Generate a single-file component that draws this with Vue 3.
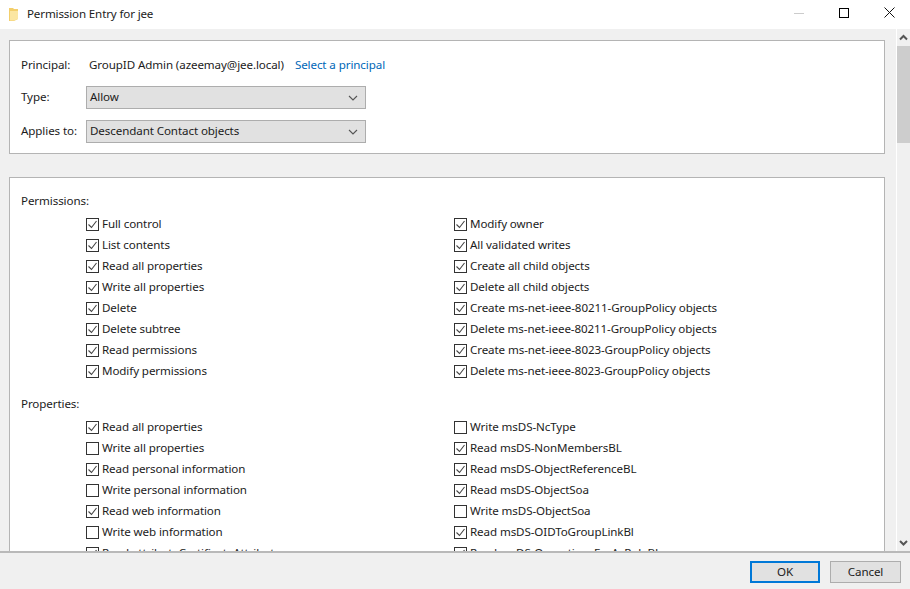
<template>
  <div class="window">
    <div class="titlebar">
      <svg class="folder" width="10" height="13" viewBox="0 0 10 13">
        <path d="M0 0h4l1 1h4v10l-4 2H0z" fill="#f3cf6c" />
        <path d="M1 3h8v8l-4 1.6H1z" fill="#fbe6a2" />
      </svg>
      <span class="title">Permission Entry for jee</span>
      <span class="btn-min"></span>
      <svg class="btn-max" width="10" height="10" viewBox="0 0 10 10">
        <rect x="0.5" y="0.5" width="9" height="9" fill="none" stroke="#000" />
      </svg>
      <svg class="btn-close" width="11" height="11" viewBox="0 0 11 11">
        <path d="M0.5 0.5l10 10M10.5 0.5l-10 10" fill="none" stroke="#111" />
      </svg>
    </div>

    <div class="middle">
      <div class="content">
        <div class="panel head">
          <div class="form-row principal">
            <span class="form-label">Principal:</span>
            <span>GroupID Admin (azeemay@jee.local)</span>
            <a class="link">Select a principal</a>
          </div>
          <div class="form-row">
            <span class="form-label">Type:</span>
            <div class="select">
              <span>Allow</span>
              <svg width="10" height="6" viewBox="0 0 10 6"><path d="M1 1l4 4 4-4" fill="none" stroke="#555" stroke-width="1.1" /></svg>
            </div>
          </div>
          <div class="form-row">
            <span class="form-label">Applies to:</span>
            <div class="select">
              <span>Descendant Contact objects</span>
              <svg width="10" height="6" viewBox="0 0 10 6"><path d="M1 1l4 4 4-4" fill="none" stroke="#555" stroke-width="1.1" /></svg>
            </div>
          </div>
        </div>

        <div class="panel perms">
          <div class="section-label first">Permissions:</div>
          <div class="check-grid">
            <div v-for="item in permissions" :key="item.text" class="check-row">
              <span class="box">
                <svg v-if="item.on" width="11" height="11" viewBox="0 0 11 11"><path d="M1.5 5.5l3 3 5-6.5" fill="none" stroke="#444" stroke-width="1.1" /></svg>
              </span>
              <span>{{ item.text }}</span>
            </div>
          </div>
          <div class="section-label">Properties:</div>
          <div class="check-grid">
            <div v-for="item in properties" :key="item.text" class="check-row">
              <span class="box">
                <svg v-if="item.on" width="11" height="11" viewBox="0 0 11 11"><path d="M1.5 5.5l3 3 5-6.5" fill="none" stroke="#444" stroke-width="1.1" /></svg>
              </span>
              <span>{{ item.text }}</span>
            </div>
          </div>
        </div>
      </div>

      <div class="scrollbar">
        <svg width="13" height="17" viewBox="0 0 13 17"><path d="M3 10.5l3.5-3.5 3.5 3.5" fill="none" stroke="#555" stroke-width="2" /></svg>
        <div class="thumb"></div>
        <div class="track"></div>
        <svg width="13" height="17" viewBox="0 0 13 17"><path d="M3 7l3.5 3.5L10 7" fill="none" stroke="#555" stroke-width="2" /></svg>
      </div>
    </div>

    <div class="footer">
      <button class="btn primary">OK</button>
      <button class="btn">Cancel</button>
    </div>
  </div>
</template>

<script setup>
const toItems = (list) => list.map(([text, on]) => ({ text, on }))

// left and right column alternate so the grid fills row by row
const permissions = toItems([
  ['Full control', true], ['Modify owner', true],
  ['List contents', true], ['All validated writes', true],
  ['Read all properties', true], ['Create all child objects', true],
  ['Write all properties', true], ['Delete all child objects', true],
  ['Delete', true], ['Create ms-net-ieee-80211-GroupPolicy objects', true],
  ['Delete subtree', true], ['Delete ms-net-ieee-80211-GroupPolicy objects', true],
  ['Read permissions', true], ['Create ms-net-ieee-8023-GroupPolicy objects', true],
  ['Modify permissions', true], ['Delete ms-net-ieee-8023-GroupPolicy objects', true]
])

const properties = toItems([
  ['Read all properties', true], ['Write msDS-NcType', false],
  ['Write all properties', false], ['Read msDS-NonMembersBL', true],
  ['Read personal information', true], ['Read msDS-ObjectReferenceBL', true],
  ['Write personal information', false], ['Read msDS-ObjectSoa', true],
  ['Read web information', true], ['Write msDS-ObjectSoa', false],
  ['Write web information', false], ['Read msDS-OIDToGroupLinkBl', true],
  ['Read attributeCertificateAttribute', true], ['Read msDS-OperationsForAzRoleBL', true]
])
</script>

<style>
html, body {
  margin: 0;
  background: #f0f0f0;
}
</style>

<style scoped>
.window {
  width: 910px;
  height: 589px;
  display: flex;
  flex-direction: column;
  overflow: hidden;
  background: #f0f0f0;
  font-family: "Noto Sans", "Open Sans", sans-serif;
  font-size: 11.6px;
  letter-spacing: -0.1px;
  color: #1c1c1c;
}

/* Noto sits about 1px lower than the reference text */
.title,
.form-row > span,
.link,
.select > span,
.check-row > span:last-child {
  padding-bottom: 2px;
}

.titlebar {
  height: 29px;
  flex: none;
  display: flex;
  align-items: center;
  background: #fff;
  padding-left: 9px;
}

.folder {
  margin-right: 8px;
}

.title {
  flex: 1;
  letter-spacing: -0.15px;
}

.btn-min {
  width: 10px;
  height: 1px;
  margin-right: 35px;
  margin-top: -3px;
  background: #cccccc;
}

.btn-max {
  margin-right: 35px;
  margin-top: -4px;
}

.btn-close {
  margin-right: 15px;
  margin-top: -4px;
}

.middle {
  flex: 1;
  min-height: 0;
  display: flex;
}

.content {
  flex: 1;
  min-width: 0;
  padding: 11px 11px 0 9px;
  overflow: hidden;
}

.panel {
  background: #fff;
  border: 1px solid #b4b4b4;
}

.head {
  height: 114px;
  box-sizing: border-box;
  padding: 11px 0 0 11px;
  margin-bottom: 23px;
}

.form-row {
  display: flex;
  align-items: center;
  height: 23px;
  margin-bottom: 11px;
}

.principal {
  margin-bottom: 8px;
  height: 26px;
}

.form-label {
  width: 65px;
  flex: none;
}

.principal .form-label {
  width: 68px;
}

.link {
  color: #0067b8;
  margin-left: 11px;
}

.select {
  width: 280px;
  height: 23px;
  box-sizing: border-box;
  display: flex;
  align-items: center;
  justify-content: space-between;
  padding: 0 3px;
  background: #e1e1e1;
  border: 1px solid #adadad;
}

.select svg {
  margin-right: 4px;
}

.perms {
  padding: 13px 0 0 11px;
  height: 600px;
}

.section-label {
  height: 21px;
  line-height: 19px;
  margin-top: 12px;
}

.section-label.first {
  margin-top: 0;
}

.check-grid {
  display: grid;
  grid-template-columns: 368px 1fr;
  grid-auto-rows: 21px;
  padding-left: 65px;
  margin-top: 2px;
}

.check-row {
  display: flex;
  align-items: center;
  gap: 3px;
  white-space: nowrap;
}

.box {
  width: 11px;
  height: 11px;
  flex: none;
  display: block;
  border: 1px solid #333;
  background: #fff;
}

.box svg {
  display: block;
}

.scrollbar {
  width: 13px;
  flex: none;
  display: flex;
  flex-direction: column;
  background: #f0f0f0;
  border-left: 1px solid #fff;
}

.scrollbar svg {
  flex: none;
  display: block;
}

.thumb {
  height: 97px;
  flex: none;
  background: #cdcdcd;
}

.track {
  flex: 1;
}

.footer {
  height: 38px;
  flex: none;
  display: flex;
  justify-content: flex-end;
  align-items: flex-start;
  gap: 10px;
  padding: 8px 9px 0 0;
  box-sizing: border-box;
  border-top: 2px solid #b9b9b9;
  background: #f0f0f0;
}

.btn {
  width: 71px;
  height: 22px;
  padding: 0 0 2px;
  font: inherit;
  letter-spacing: inherit;
  color: #1c1c1c;
  background: #e1e1e1;
  border: 1px solid #adadad;
}

.btn.primary {
  width: 70px;
  border: 2px solid #0078d7;
}
</style>
